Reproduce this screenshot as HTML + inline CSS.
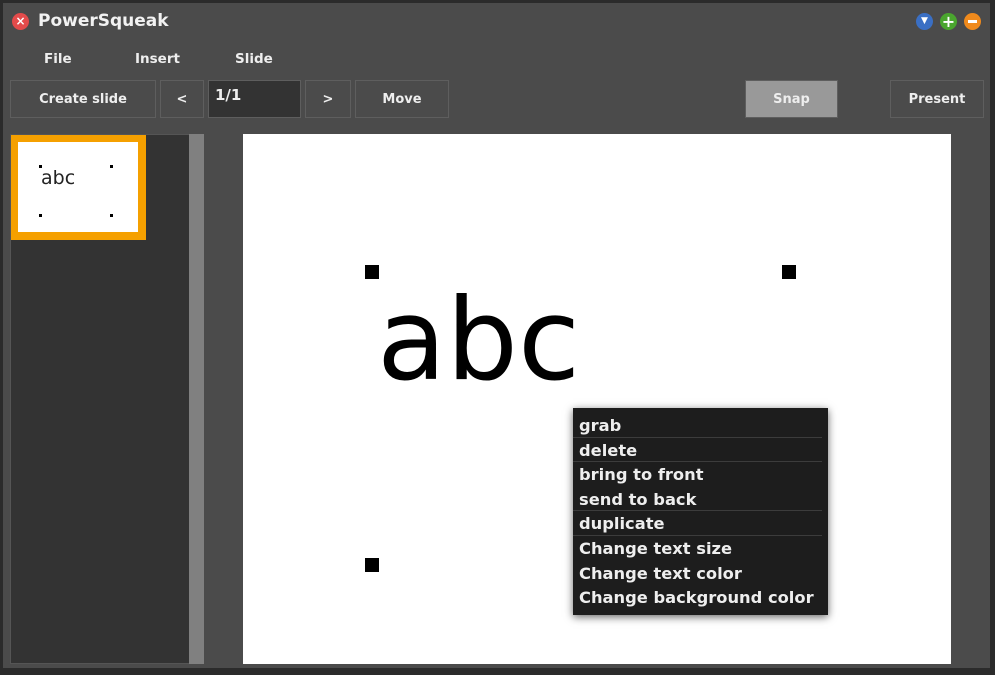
<!DOCTYPE html><html><head><style>
body{margin:0;width:995px;height:675px;background:#2b2b2b;position:relative;overflow:hidden;font-family:"DejaVu Sans","Liberation Sans",sans-serif;}
.a{position:absolute;}
#win{left:3px;top:3px;width:987px;height:665px;background:#4b4b4b;}
.btn{position:absolute;border:1px solid #5e5e5e;color:#eee;font-weight:bold;font-size:13px;text-align:center;box-sizing:border-box;line-height:37px;background:#4b4b4b}
.mi{position:absolute;color:#eee;font-weight:bold;font-size:13.5px;}
.h{position:absolute;width:14px;height:14px;background:#000;}
.d{position:absolute;width:3px;height:3px;background:#000;}
#menu{left:573px;top:408px;width:255px;height:207px;background:#1d1d1d;box-shadow:0 2px 8px rgba(0,0,0,.6);color:#eee;font-size:16.3px;font-weight:bold;}
#menu div{height:24.6px;line-height:25px;padding-left:6px;box-sizing:border-box;white-space:nowrap}
#menu .s{border-bottom:1px solid #3c3c3c;margin-right:6px;}
</style></head><body>
<div id="win" class="a"></div>
<div class="a" style="left:12px;top:13px;width:17px;height:17px;border-radius:50%;background:#e34b4b;color:#fff;font-size:12px;line-height:17px;text-align:center;font-weight:bold">×</div>
<div class="a" style="left:38px;top:11px;color:#f2f2f2;font-size:17px;font-weight:bold">PowerSqueak</div>
<div class="a" style="left:916px;top:13px;width:17px;height:17px;border-radius:50%;background:#3a6fc4;color:#fff;font-size:9px;line-height:17px;text-align:center">▼</div>
<div class="a" style="left:940px;top:13px;width:17px;height:17px;border-radius:50%;background:#4aa52e;color:#fff;font-size:16px;line-height:17px;text-align:center;font-weight:bold">+</div>
<div class="a" style="left:964px;top:13px;width:17px;height:17px;border-radius:50%;background:#f08a1c;"><div class="a" style="left:4px;top:7px;width:9px;height:3px;background:#fff"></div></div>
<div class="mi" style="left:44px;top:51px">File</div>
<div class="mi" style="left:135px;top:51px">Insert</div>
<div class="mi" style="left:235px;top:51px">Slide</div>
<div class="btn" style="left:10px;top:80px;width:146px;height:38px">Create slide</div>
<div class="btn" style="left:160px;top:80px;width:44px;height:38px">&lt;</div>
<div class="btn" style="left:208px;top:80px;width:93px;height:38px;background:#333;text-align:left;padding-left:6px;line-height:28px;font-size:15px">1/1</div>
<div class="btn" style="left:305px;top:80px;width:46px;height:38px">&gt;</div>
<div class="btn" style="left:355px;top:80px;width:94px;height:38px">Move</div>
<div class="btn" style="left:745px;top:80px;width:93px;height:38px;background:#999">Snap</div>
<div class="btn" style="left:890px;top:80px;width:94px;height:38px">Present</div>
<div class="a" style="left:10px;top:134px;width:194px;height:530px;background:#333;border:1px solid #555;box-sizing:border-box"></div>
<div class="a" style="left:189px;top:134px;width:15px;height:530px;background:#808080"></div>
<div class="a" style="left:11px;top:135px;width:135px;height:105px;background:#f5a000"></div>
<div class="a" style="left:18px;top:142px;width:120px;height:90px;background:#fff"></div>
<div class="a" style="left:41px;top:167px;font-size:19px;color:#222">abc</div>
<div class="d" style="left:39px;top:165px"></div><div class="d" style="left:110px;top:165px"></div>
<div class="d" style="left:39px;top:214px"></div><div class="d" style="left:110px;top:214px"></div>
<div class="a" style="left:243px;top:134px;width:708px;height:530px;background:#fff"></div>
<div class="h" style="left:365px;top:265px"></div>
<div class="h" style="left:782px;top:265px"></div>
<div class="h" style="left:365px;top:558px"></div>
<div class="a" style="left:377px;top:275px;font-size:113px;color:#000;line-height:130px">abc</div>
<div id="menu" class="a" style="padding-top:5px;box-sizing:border-box">
<div class="s">grab</div><div class="s">delete</div><div>bring to front</div><div class="s">send to back</div><div class="s">duplicate</div><div>Change text size</div><div>Change text color</div><div>Change background color</div>
</div>
</body></html>
